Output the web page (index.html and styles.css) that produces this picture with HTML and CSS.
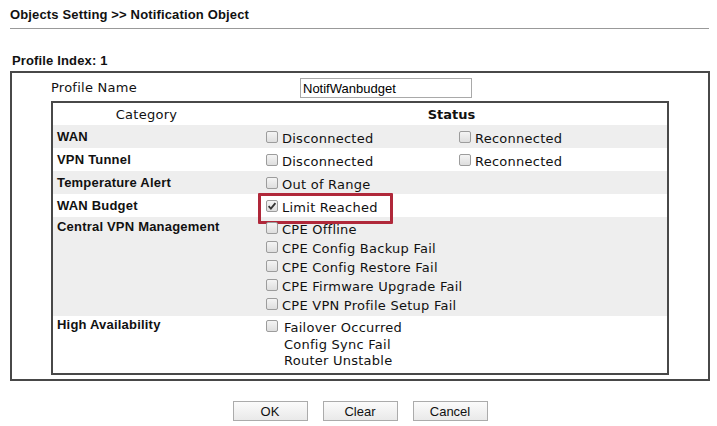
FILE: index.html
```html
<!DOCTYPE html>
<html>
<head>
<meta charset="utf-8">
<link rel="stylesheet" href="styles.css">
</head>
<body>
<div class="page">
  <h1 class="title">Objects Setting &gt;&gt; Notification Object</h1>
  <div class="index">Profile Index: 1</div>
  <div class="box">
    <div class="name-row">
      <span class="name-label">Profile Name</span>
      <input class="name-input" type="text" value="NotifWanbudget">
    </div>
    <div class="cat-table">
      <div class="row head">
        <div class="cat">Category</div>
        <div class="status-h">Status</div>
      </div>
      <div class="row gray">
        <div class="cat lbl">WAN</div>
        <div class="st two">
          <span class="item"><span class="cb"></span>Disconnected</span>
          <span class="item"><span class="cb"></span>Reconnected</span>
        </div>
      </div>
      <div class="row">
        <div class="cat lbl">VPN Tunnel</div>
        <div class="st two">
          <span class="item"><span class="cb"></span>Disconnected</span>
          <span class="item"><span class="cb"></span>Reconnected</span>
        </div>
      </div>
      <div class="row gray">
        <div class="cat lbl">Temperature Alert</div>
        <div class="st two">
          <span class="item"><span class="cb"></span>Out of Range</span>
        </div>
      </div>
      <div class="row">
        <div class="cat lbl">WAN Budget</div>
        <div class="st two">
          <span class="item marked"><span class="cb checked"><svg viewBox="0 0 12 12" width="12" height="12"><path d="M2.6 6.2 L4.9 8.6 L9.4 3.2" fill="none" stroke="#333" stroke-width="1.8"/></svg></span>Limit Reached</span>
        </div>
      </div>
      <div class="row gray multi">
        <div class="cat lbl top">Central VPN Management</div>
        <div class="st list">
          <span class="item"><span class="cb"></span>CPE Offline</span>
          <span class="item"><span class="cb"></span>CPE Config Backup Fail</span>
          <span class="item"><span class="cb"></span>CPE Config Restore Fail</span>
          <span class="item"><span class="cb"></span>CPE Firmware Upgrade Fail</span>
          <span class="item"><span class="cb"></span>CPE VPN Profile Setup Fail</span>
        </div>
      </div>
      <div class="row ha">
        <div class="cat lbl top">High Availability</div>
        <div class="st ha-list">
          <span class="item first"><span class="cb wide"></span>Failover Occurred</span>
          <span class="plain">Config Sync Fail</span>
          <span class="plain">Router Unstable</span>
        </div>
      </div>
    </div>
  </div>
  <div class="buttons">
    <button class="btn">OK</button>
    <button class="btn">Clear</button>
    <button class="btn">Cancel</button>
  </div>
</div>
</body>
</html>
```

FILE: styles.css
```css
* { box-sizing: border-box; }
html, body { margin: 0; padding: 0; background: #fff; }
body { font-family: "Liberation Sans", Arial, sans-serif; color: #000; }

.page { padding: 0 7px 0 10px; width: 717px; }

.title {
  margin: 0 1px 0 0;
  padding: 6px 0 5px;
  font-size: 13px;
  line-height: 17px;
  font-weight: bold;
  letter-spacing: 0.15px;
  color: #111;
  border-bottom: 1px solid #999;
}

.index {
  margin: 24px 0 2px 2px;
  font-size: 13px;
  line-height: 16px;
  font-weight: bold;
  letter-spacing: 0.15px;
  color: #111;
}

.box {
  width: 700px;
  height: 310px;
  border: 2px solid #484848;
  padding: 0 39px 0 39px;
}

.name-row {
  height: 28px;
  display: grid;
  grid-template-columns: 249px 172px;
  align-items: center;
}
.name-label {
  font-family: "DejaVu Sans", Verdana, sans-serif;
  font-size: 13px;
  letter-spacing: 0.25px;
  color: #111;
  padding-top: 1px;
}
.name-input {
  width: 172px;
  height: 20px;
  margin: 2px 0 0;
  border: 1px solid #a9a9a9;
  padding: 0 3px 0 2px;
  font-family: "Liberation Sans", Arial, sans-serif;
  font-size: 13px;
  color: #000;
  outline: none;
}

.cat-table {
  width: 618px;
  height: 274px;
  border: 2px solid #484848;
}

.row {
  display: grid;
  grid-template-columns: 187px 1fr;
  height: 23px;
  align-items: center;
}
.row.gray { background: #eeeeee; }
.row.head { height: 22px; }
.row.multi { height: 99px; align-items: start; }
.row.ha { height: 57px; align-items: start; }

.head .cat {
  text-align: center;
  font-family: "DejaVu Sans", Verdana, sans-serif;
  font-size: 13px;
  letter-spacing: 0.25px;
  color: #111;
}
.status-h {
  text-align: center;
  font-family: "DejaVu Sans", Verdana, sans-serif;
  font-weight: bold;
  font-size: 13px;
  color: #111;
  padding-right: 4px;
}

.lbl {
  padding-left: 4px;
  font-size: 13px;
  font-weight: bold;
  line-height: 16px;
  letter-spacing: 0.2px;
  color: #111;
}
.multi .lbl { padding-top: 2px; }
.ha .lbl { padding-top: 1px; }

.st {
  font-family: "DejaVu Sans", Verdana, sans-serif;
  font-size: 13px;
  letter-spacing: 0.25px;
  color: #111;
  padding-left: 26px;
}
.two {
  display: grid;
  grid-template-columns: 193px auto;
  padding-top: 3px;
}
.list {
  display: flex;
  flex-direction: column;
  padding-top: 3px;
}
.list .item { height: 19px; }

.ha-list {
  display: flex;
  flex-direction: column;
  padding-top: 1px;
}
.ha-list .first { height: 20px; }
.ha-list .plain { height: 16px; line-height: 16px; padding-left: 18px; }

.item {
  display: flex;
  align-items: center;
  position: relative;
  white-space: nowrap;
}
.cb {
  width: 12px;
  height: 12px;
  flex: none;
  margin-right: 4px;
  margin-top: -3px;
  border: 1px solid #9c9c9c;
  border-radius: 2px;
  background: linear-gradient(#f4f4f4, #dedede);
  display: inline-flex;
  align-items: center;
  justify-content: center;
}
.cb svg { display: block; margin: -1px; }
.cb.wide { margin-right: 6px; }

.marked::after {
  content: "";
  position: absolute;
  left: -8px;
  top: -7px;
  width: 129px;
  height: 25px;
  border: 3px solid #b0283a;
  border-radius: 1px;
}

.buttons {
  width: 700px;
  display: flex;
  justify-content: center;
  gap: 15px;
  margin-top: 20px;
}
.btn {
  width: 75px;
  height: 20px;
  padding: 0;
  border: 1px solid #ababab;
  border-radius: 0;
  background: linear-gradient(#fbfbfb, #e9e9e9);
  font-family: "Liberation Sans", Arial, sans-serif;
  font-size: 13px;
  color: #111;
}
```
